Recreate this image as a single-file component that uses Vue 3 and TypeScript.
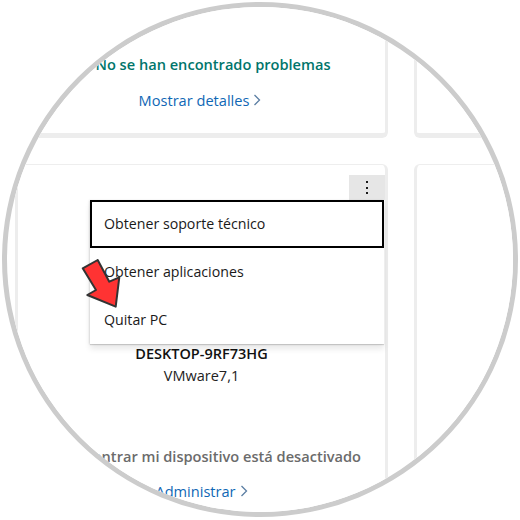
<script setup lang="ts">
const menuItems: string[] = ['Obtener soporte técnico', 'Obtener aplicaciones', 'Quitar PC']
</script>

<template>
  <div class="page">
    <div class="ring">
      <div class="grid">
        <section class="card top">
          <p class="status">
            <svg class="mark" width="18" height="18" viewBox="0 0 18 18"><circle cx="9" cy="9" r="8" /><path d="M5 9 L8 12 L13 6" /></svg>
            No se han encontrado problemas
          </p>
          <a class="link details">Mostrar detalles <svg class="chev" width="8" height="12" viewBox="0 0 8 12"><path d="M1.5 1 L6.5 6 L1.5 11" /></svg></a>
        </section>
        <section class="card side top-side"></section>
        <section class="card device">
          <button class="kebab" aria-label="Más">
            <svg width="4" height="16" viewBox="0 0 4 16"><rect x="1" y="1" width="2" height="2" /><rect x="1" y="7" width="2" height="2" /><rect x="1" y="12" width="2" height="2" /></svg>
          </button>
          <div class="name">DESKTOP-9RF73HG</div>
          <div class="model">VMware7,1</div>
          <div class="find">
            <svg class="mark gray" width="18" height="18" viewBox="0 0 18 18"><circle cx="9" cy="9" r="8" /></svg>
            Encontrar mi dispositivo está desactivado
          </div>
          <a class="link manage">Administrar <svg class="chev" width="8" height="12" viewBox="0 0 8 12"><path d="M1.5 1 L6.5 6 L1.5 11" /></svg></a>
          <ul class="menu">
            <li v-for="(item, i) in menuItems" :key="item" class="item" :class="{ focused: i === 0 }">{{ item }}</li>
          </ul>
          <svg class="arrow" width="70" height="70" viewBox="0 0 70 70">
            <path d="M45.700 56.700 L49.300 27.300 L39.300 31.700 L27.700 10 L12.700 18.300 L26 40 L17.300 45 Z" />
          </svg>
        </section>
        <section class="card side"></section>
      </div>
    </div>
  </div>
</template>

<style scoped>
.page {
  width: 520px;
  height: 520px;
  padding: 2px;
  box-sizing: border-box;
  background: #fff;
  font-family: "Open Sans", "Noto Sans", sans-serif;
  color: #1a1a1a;
}
.ring {
  width: 516px;
  height: 515px;
  box-sizing: border-box;
  border: 5px solid #cccccc;
  border-radius: 50%;
  overflow: hidden;
  background: #fff;
}
.grid {
  display: grid;
  grid-template-columns: 373px 200px;
  grid-template-rows: 131px 420px;
  column-gap: 26px;
  row-gap: 26px;
  margin-left: 8px;
  width: 600px;
}
.card {
  box-sizing: border-box;
  background: #fff;
  border-right: 3px solid #ededed;
  border-bottom: 5px solid #ededed;
  border-radius: 0 0 6px 6px;
}
.top {
  display: flex;
  flex-direction: column;
  align-items: center;
  padding-top: 47px;
}
.top-side {
  border-right: 0;
  border-left: 2px solid #ededed;
  border-radius: 0 0 0 6px;
}
.side {
  border-right: 0;
  border-left: 3px solid #ededed;
}
.device {
  position: relative;
  border-top: 1px solid #eeeeee;
  border-left: 3px solid #ededed;
  border-radius: 6px 6px 0 0;
  display: flex;
  flex-direction: column;
  align-items: center;
  padding-top: 10px;
}
.side:last-child {
  border-top: 1px solid #eeeeee;
  border-radius: 6px 0 0 0;
}
.status {
  margin: 0;
  display: flex;
  align-items: center;
  gap: 8px;
  font-size: 14.6px;
  line-height: 20px;
  font-weight: 600;
  color: #00756b;
}
.mark circle { fill: #00756b; }
.mark path {
  fill: none;
  stroke: #fff;
  stroke-width: 1.5;
}
.mark.gray circle { fill: #6b6b6b; }
.link {
  color: #0f67b5;
  font-size: 14.6px;
  line-height: 20px;
  display: inline-flex;
  align-items: center;
  gap: 4px;
}
.details { margin-top: 16px; }
.chev path {
  fill: none;
  stroke: #5b7ea3;
  stroke-width: 1.3;
}
.kebab {
  align-self: flex-end;
  width: 36px;
  height: 25px;
  padding: 0;
  border: 0;
  background: #e6e6e6;
  display: flex;
  align-items: center;
  justify-content: center;
}
.kebab rect { fill: #1a1a1a; }
.name {
  margin-top: 144px;
  font-size: 14.5px;
  line-height: 20px;
  font-weight: 600;
  color: #111;
}
.model {
  margin-top: 2px;
  font-size: 14.5px;
  line-height: 20px;
  color: #222;
}
.find {
  margin-top: 60px;
  display: flex;
  align-items: center;
  gap: 8px;
  font-size: 14.6px;
  line-height: 20px;
  font-weight: 600;
  color: #6b6b6b;
  white-space: nowrap;
}
.manage { margin-top: 15px; }
.menu {
  position: absolute;
  top: 35px;
  left: 72px;
  width: 294px;
  margin: 0;
  padding: 0;
  list-style: none;
  background: #fff;
  box-shadow: 0 1px 1px rgba(0, 0, 0, 0.14), 0 5px 6px rgba(0, 0, 0, 0.09), -1px 0 2px rgba(0, 0, 0, 0.09);
}
.item {
  box-sizing: border-box;
  height: 48px;
  padding: 0 0 2px 14px;
  display: flex;
  align-items: center;
  font-size: 14.2px;
  color: #1a1a1a;
}
.focused {
  border: 2px solid #000;
  padding: 0 0 2px 12px;
}
.arrow {
  position: absolute;
  top: 85px;
  left: 52px;
}
.arrow path {
  fill: #ff3333;
  stroke: #333333;
  stroke-width: 2;
  stroke-linejoin: round;
}
</style>
